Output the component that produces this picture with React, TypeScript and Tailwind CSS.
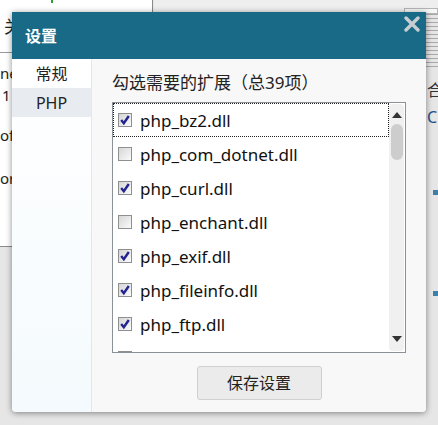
import React from 'react';

const EXTENSIONS: { name: string; checked: boolean }[] = [
  { name: 'php_bz2.dll', checked: true },
  { name: 'php_com_dotnet.dll', checked: false },
  { name: 'php_curl.dll', checked: true },
  { name: 'php_enchant.dll', checked: false },
  { name: 'php_exif.dll', checked: true },
  { name: 'php_fileinfo.dll', checked: true },
  { name: 'php_ftp.dll', checked: true },
  { name: 'php_gd2.dll', checked: false },
];

const FONT = { fontFamily: '"Noto Sans", "Noto Sans CJK SC", sans-serif' };

const CheckBox: React.FC<{ checked: boolean }> = ({ checked }) => (
  <div className="w-[14px] h-[14px] shrink-0 border border-[#8e8f8f] bg-gradient-to-br from-[#d6d6d6] to-[#fbfbfb] flex items-center justify-center">
    {checked && (
      <svg width="12" height="12" viewBox="0 0 12 12">
        <path d="M2.2 6 L4.8 9.2 L9.8 2" fill="none" stroke="#24248f" strokeWidth="2.4" strokeLinejoin="miter" />
      </svg>
    )}
  </div>
);

const Background: React.FC = () => (
  <>
    {/* window behind, left */}
    <div className="absolute left-0 top-0 w-[153px] h-[247px] bg-white border-r border-b border-[#8a8a8a]">
      <div className="absolute left-[4px] top-[14px] text-[17px] text-[#222]" style={FONT}>关</div>
      <div className="absolute left-0 top-[52px] w-full h-px bg-[#9a9a9a]" />
      <div className="absolute left-0 top-[63px] text-[15px] leading-[20px] text-[#222]" style={FONT}>ne</div>
      <div className="absolute left-[2px] top-[85px] text-[15px] leading-[20px] text-[#222]" style={FONT}>1</div>
      <div className="absolute left-0 top-[125px] text-[15px] leading-[20px] text-[#222]" style={FONT}>of</div>
      <div className="absolute left-0 top-[168px] text-[15px] leading-[20px] text-[#222]" style={FONT}>or</div>
      <div className="absolute left-[51px] top-0 w-[2px] h-[3px] bg-[#2ca02c]" />
    </div>
    {/* top strip */}
    <div className="absolute left-[154px] top-0 w-[284px] h-[14px] bg-[#eeeeee]" />
    <div className="absolute left-[404px] top-[8px] w-[34px] h-[6px] border border-[#b5b5b5] bg-[#f6f6f6]" />
    {/* right strip */}
    <div className="absolute left-[426px] top-[12px] w-[12px] h-[64px] flex flex-col gap-[3px] pt-[2px]">
      {Array.from({ length: 14 }).map((_, i) => (
        <div key={i} className="h-px w-full bg-[#a9a9a9]" />
      ))}
    </div>
    <div className="absolute left-[427px] top-[80px] text-[16px] leading-[20px] text-[#333]" style={FONT}>合</div>
    <div className="absolute left-[427px] top-[107px] text-[16px] leading-[20px] text-[#1d4f8a]" style={FONT}>C</div>
    <div className="absolute left-[433px] top-[190px] w-[5px] h-[5px] bg-[#3d7fa8]" />
    <div className="absolute left-[433px] top-[291px] w-[5px] h-[5px] bg-[#3d7fa8]" />
  </>
);

const App: React.FC = () => {
  return (
    <div className="relative w-[438px] h-[425px] overflow-hidden bg-[#e6e6e6]" style={FONT}>
      <Background />

      {/* settings dialog */}
      <div className="absolute left-[12px] top-[12px] w-[414px] h-[400px] flex flex-col rounded-b-[4px] overflow-hidden shadow-[0_1px_6px_rgba(0,0,0,0.45)]">
        <div className="h-[47px] shrink-0 bg-[#186a86] flex items-center justify-between pl-[13px] pr-[6px]">
          <span className="text-[16px] font-bold text-white leading-none">设置</span>
          <svg width="16" height="16" viewBox="0 0 16 16" className="mb-[24px]">
            <path d="M2 2 L14 14 M14 2 L2 14" stroke="#c9cdd1" strokeWidth="3.4" strokeLinecap="round" />
          </svg>
        </div>

        <div className="flex-1 flex min-h-0">
          {/* sidebar */}
          <div className="w-[80px] shrink-0 bg-gradient-to-b from-white to-[#f4fafd] border-r border-[#e6e6e6] flex flex-col">
            <div className="h-[29px] flex items-center justify-center text-[16px] text-[#222]">常规</div>
            <div className="h-[29px] flex items-center justify-center text-[16px] text-[#222] bg-[#e8ebef]">PHP</div>
          </div>

          {/* content */}
          <div className="flex-1 bg-[#f8f8f8] flex flex-col px-[20px] pt-[13px] pb-[12px]">
            <div className="text-[17px] leading-[22px] text-[#222]">勾选需要的扩展（总39项）</div>
            <div className="mt-[8px] h-[251px] border border-[#8c9099] bg-white flex overflow-hidden">
              <div className="flex-1 flex flex-col overflow-hidden">
                {EXTENSIONS.map((ext, i) => (
                  <div
                    key={ext.name}
                    className={`h-[34px] shrink-0 flex items-center gap-[8px] pl-[4px] ${
                      i === 0 ? 'border border-dotted border-[#222]' : 'border border-transparent'
                    }`}
                  >
                    <CheckBox checked={ext.checked} />
                    <span className="text-[17px] text-[#111] leading-none">{ext.name}</span>
                  </div>
                ))}
              </div>
              {/* scrollbar */}
              <div className="w-[16px] shrink-0 py-[1px] pr-[1px]">
                <div className="h-full rounded-[4px] bg-[#f0f0f0] flex flex-col items-center">
                  <svg width="10" height="6" viewBox="0 0 10 6" className="mt-[8px]">
                    <path d="M0 6 L5 0 L10 6 Z" fill="#333" />
                  </svg>
                  <div className="mt-[6px] w-[12px] h-[36px] rounded-[6px] bg-[#cdcdcd]" />
                  <div className="flex-1" />
                  <svg width="10" height="6" viewBox="0 0 10 6" className="mb-[9px]">
                    <path d="M0 0 L10 0 L5 6 Z" fill="#333" />
                  </svg>
                </div>
              </div>
            </div>
            <div className="flex justify-center mt-[13px]">
              <button className="w-[125px] h-[34px] rounded-[3px] border border-[#d0d0d0] bg-[#ebebeb] text-[16px] text-[#222]">
                保存设置
              </button>
            </div>
          </div>
        </div>
      </div>
    </div>
  );
};

export default App;
